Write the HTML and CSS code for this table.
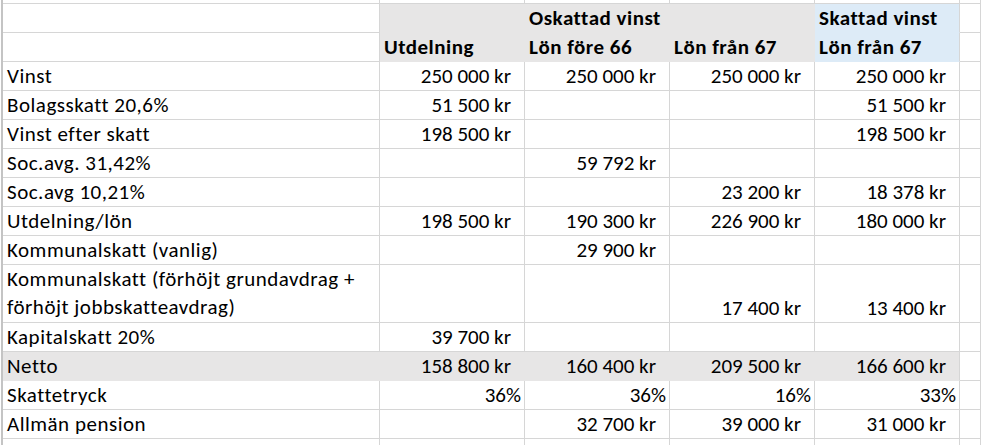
FILE: index.html
```html
<!DOCTYPE html>
<html lang="sv">
<head>
<meta charset="utf-8">
<title>Skatt jämförelse</title>
<link rel="stylesheet" href="styles.css">
</head>
<body>
<div class="sheet">
  <div class="row top"><div class="c"></div><div class="c"></div><div class="c"></div><div class="c"></div><div class="c"></div><div class="c"></div></div>
  <div class="row">
    <div class="c"></div>
    <div class="c gray"></div>
    <div class="c gray h">Oskattad vinst</div>
    <div class="c gray"></div>
    <div class="c blue h">Skattad vinst</div>
    <div class="c"></div>
  </div>
  <div class="row">
    <div class="c"></div>
    <div class="c gray h">Utdelning</div>
    <div class="c gray h">Lön före 66</div>
    <div class="c gray h">Lön från 67</div>
    <div class="c blue h">Lön från 67</div>
    <div class="c"></div>
  </div>
  <div class="row">
    <div class="c t">Vinst</div>
    <div class="c n">250 000 kr</div>
    <div class="c n">250 000 kr</div>
    <div class="c n">250 000 kr</div>
    <div class="c n">250 000 kr</div>
    <div class="c"></div>
  </div>
  <div class="row">
    <div class="c t">Bolagsskatt 20,6%</div>
    <div class="c n">51 500 kr</div>
    <div class="c n"></div>
    <div class="c n"></div>
    <div class="c n">51 500 kr</div>
    <div class="c"></div>
  </div>
  <div class="row">
    <div class="c t">Vinst efter skatt</div>
    <div class="c n">198 500 kr</div>
    <div class="c n"></div>
    <div class="c n"></div>
    <div class="c n">198 500 kr</div>
    <div class="c"></div>
  </div>
  <div class="row">
    <div class="c t">Soc.avg. 31,42%</div>
    <div class="c n"></div>
    <div class="c n">59 792 kr</div>
    <div class="c n"></div>
    <div class="c n"></div>
    <div class="c"></div>
  </div>
  <div class="row">
    <div class="c t">Soc.avg 10,21%</div>
    <div class="c n"></div>
    <div class="c n"></div>
    <div class="c n">23 200 kr</div>
    <div class="c n">18 378 kr</div>
    <div class="c"></div>
  </div>
  <div class="row">
    <div class="c t">Utdelning/lön</div>
    <div class="c n">198 500 kr</div>
    <div class="c n">190 300 kr</div>
    <div class="c n">226 900 kr</div>
    <div class="c n">180 000 kr</div>
    <div class="c"></div>
  </div>
  <div class="row">
    <div class="c t">Kommunalskatt (vanlig)</div>
    <div class="c n"></div>
    <div class="c n">29 900 kr</div>
    <div class="c n"></div>
    <div class="c n"></div>
    <div class="c"></div>
  </div>
  <div class="row tall">
    <div class="c t">Kommunalskatt (förhöjt grundavdrag +<br>förhöjt jobbskatteavdrag)</div>
    <div class="c n"></div>
    <div class="c n"></div>
    <div class="c n">17 400 kr</div>
    <div class="c n">13 400 kr</div>
    <div class="c"></div>
  </div>
  <div class="row">
    <div class="c t">Kapitalskatt 20%</div>
    <div class="c n">39 700 kr</div>
    <div class="c n"></div>
    <div class="c n"></div>
    <div class="c n"></div>
    <div class="c"></div>
  </div>
  <div class="row">
    <div class="c t gray">Netto</div>
    <div class="c gray n">158 800 kr</div>
    <div class="c gray n">160 400 kr</div>
    <div class="c gray n">209 500 kr</div>
    <div class="c gray n last">166 600 kr</div>
    <div class="c"></div>
  </div>
  <div class="row">
    <div class="c t">Skattetryck</div>
    <div class="c p">36%</div>
    <div class="c p">36%</div>
    <div class="c p">16%</div>
    <div class="c p">33%</div>
    <div class="c"></div>
  </div>
  <div class="row">
    <div class="c t">Allmän pension</div>
    <div class="c n"></div>
    <div class="c n">32 700 kr</div>
    <div class="c n">39 000 kr</div>
    <div class="c n">31 000 kr</div>
    <div class="c"></div>
  </div>
  <div class="row tail">
    <div class="c"></div><div class="c"></div><div class="c"></div><div class="c"></div><div class="c"></div><div class="c"></div>
  </div>
</div>
</body>
</html>
```
FILE: styles.css
```css
html, body {
  margin: 0;
  padding: 0;
  background: #ffffff;
  overflow: hidden;
}

body {
  font-family: Carlito, Lato, "Liberation Sans", sans-serif;
  font-size: 21px;
  color: #000000;
}

.sheet {
  margin-left: 1px;
  border-left: 2px solid #c4c4c4;
}

.row {
  display: grid;
  grid-template-columns: 377px 145px 145px 145px 145px 1fr;
  height: 29px;
}

.row.top {
  height: 4px;
}

.row.tall {
  height: 58px;
}

.row.tail {
  height: 6px;
}

.c {
  box-sizing: border-box;
  border-right: 1px solid #d6d6d6;
  border-bottom: 1px solid #d6d6d6;
  display: flex;
  align-items: flex-end;
  padding: 0 4px 0 4px;
  line-height: 28px;
  white-space: nowrap;
  overflow: hidden;
}

.row.tail .c {
  border-bottom: none;
}

.t {
  letter-spacing: 0.5px;
}

.row.tall .c:first-child {
  display: block;
}

.h {
  font-weight: 700;
  letter-spacing: 0.5px;
}

.n {
  justify-content: flex-end;
  padding-right: 13px;
}

.p {
  justify-content: flex-end;
  padding-right: 3px;
}

.gray {
  background: #e7e6e6;
  border-right-color: #e7e6e6;
  border-bottom-color: #e7e6e6;
}

.gray.last {
  border-right-color: #d6d6d6;
}

.blue {
  background: #ddebf7;
  border-bottom-color: #ddebf7;
}
```
